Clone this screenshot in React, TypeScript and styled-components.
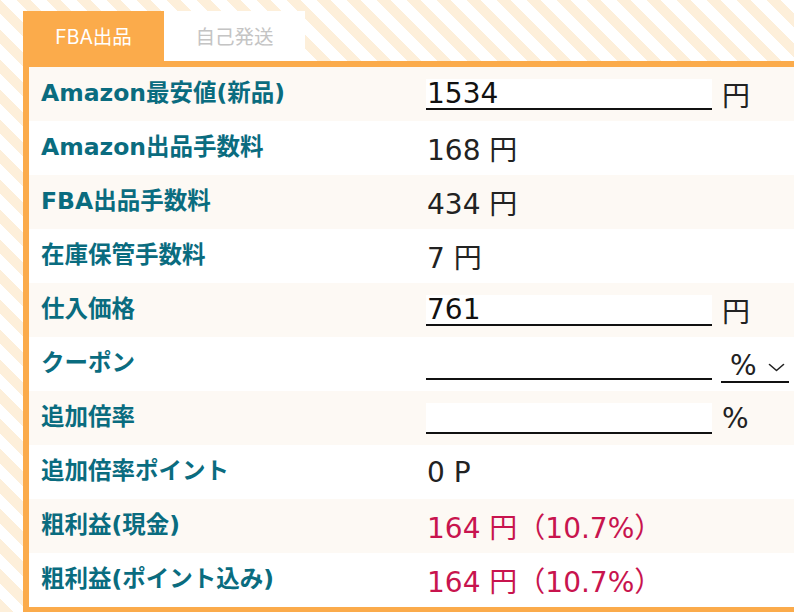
import React, { useState } from "react";
import styled, { createGlobalStyle } from "styled-components";

const ORANGE = "#fbab4b";
const TEAL = "#0a6c7f";
const PROFIT = "#c8144e";

const GlobalStyle = createGlobalStyle`
  html, body {
    margin: 0;
    padding: 0;
    overflow: hidden;
  }
  body {
    background: repeating-linear-gradient(
      45deg,
      #fdefda 0 10px,
      #ffffff 10px 21.2px
    );
    min-height: 612px;
  }
`;

interface RowData {
  label: string;
  kind: "input" | "text" | "coupon" | "profit";
  value?: string;
  unit?: string;
}

const rows: RowData[] = [
  { label: "Amazon最安値(新品)", kind: "input", value: "1534", unit: "円" },
  { label: "Amazon出品手数料", kind: "text", value: "168 円" },
  { label: "FBA出品手数料", kind: "text", value: "434 円" },
  { label: "在庫保管手数料", kind: "text", value: "7 円" },
  { label: "仕入価格", kind: "input", value: "761", unit: "円" },
  { label: "クーポン", kind: "coupon", value: "" },
  { label: "追加倍率", kind: "input", value: "", unit: "%" },
  { label: "追加倍率ポイント", kind: "text", value: "0 P" },
  { label: "粗利益(現金)", kind: "profit", value: "164 円（10.7%）" },
  { label: "粗利益(ポイント込み)", kind: "profit", value: "164 円（10.7%）" },
];

const App: React.FC = () => {
  const [tab, setTab] = useState<"fba" | "self">("fba");

  return (
    <>
      <GlobalStyle />
      <Page>
        <Panel>
          <Tabs>
            <Tab $active={tab === "fba"} onClick={() => setTab("fba")}>
              FBA出品
            </Tab>
            <Tab $active={tab === "self"} onClick={() => setTab("self")}>
              自己発送
            </Tab>
          </Tabs>

          <Sheet>
            {rows.map((row, i) => (
              <Row key={row.label} $alt={i % 2 === 0}>
                <Label>{row.label}</Label>
                <Cell>
                  {row.kind === "input" && (
                    <>
                      <NumberInput defaultValue={row.value} />
                      <Unit>{row.unit}</Unit>
                    </>
                  )}
                  {row.kind === "coupon" && (
                    <>
                      <NumberInput defaultValue="" />
                      <UnitSelect>
                        <span>%</span>
                        <svg width="17" height="9" viewBox="0 0 17 9">
                          <path
                            d="M1.5 1.5 L8.5 7.5 L15.5 1.5"
                            fill="none"
                            stroke="#222"
                            strokeWidth="1.6"
                            strokeLinecap="round"
                            strokeLinejoin="round"
                          />
                        </svg>
                      </UnitSelect>
                    </>
                  )}
                  {row.kind === "text" && <Value>{row.value}</Value>}
                  {row.kind === "profit" && <Value $profit>{row.value}</Value>}
                </Cell>
              </Row>
            ))}
          </Sheet>
        </Panel>
      </Page>
    </>
  );
};

const Page = styled.div`
  padding: 11px 0 0 23px;
`;

const Panel = styled.div`
  width: 800px;
`;

const Tabs = styled.div`
  display: flex;
`;

const Tab = styled.div<{ $active: boolean }>`
  width: 141px;
  height: 50px;
  display: flex;
  align-items: center;
  justify-content: center;
  background: ${(p) => (p.$active ? ORANGE : "#ffffff")};
  color: ${(p) => (p.$active ? "#ffffff" : "#c4c4c4")};
  font-family: "Inter", "Noto Sans CJK JP", sans-serif;
  font-size: 19.5px;
  padding-bottom: 2px;
  box-sizing: border-box;
  cursor: pointer;
`;

const Sheet = styled.div`
  border: 6px solid ${ORANGE};
  border-right: none;
`;

const Row = styled.div<{ $alt: boolean }>`
  display: grid;
  grid-template-columns: 397px 1fr;
  height: 54px;
  background: ${(p) => (p.$alt ? "#fdf9f4" : "#ffffff")};
`;

const Label = styled.div`
  align-self: center;
  padding: 0 0 6px 12px;
  font-family: "DejaVu Sans", "Noto Sans CJK JP", sans-serif;
  font-weight: 700;
  font-size: 23.5px;
  color: ${TEAL};
  white-space: nowrap;
`;

const Cell = styled.div`
  display: flex;
  align-items: center;
  font-family: "DejaVu Sans", "Noto Sans CJK JP", sans-serif;
  font-size: 28px;
  color: #222;
`;

const NumberInput = styled.input`
  width: 286px;
  height: 31px;
  box-sizing: border-box;
  border: none;
  border-bottom: 2px solid #111;
  background: #ffffff;
  padding: 0 0 0 1px;
  margin: 0;
  font: inherit;
  color: #111;
  line-height: 29px;
  outline: none;
`;

const Unit = styled.span`
  margin-left: 10px;
`;

const UnitSelect = styled.div`
  display: flex;
  align-items: center;
  gap: 11px;
  width: 68px;
  height: 33px;
  box-sizing: border-box;
  margin: 4px 0 0 9px;
  padding-left: 9px;
  border-bottom: 2px solid #111;

  svg {
    margin-top: 4px;
  }
`;

const Value = styled.span<{ $profit?: boolean }>`
  padding-left: 1px;
  color: ${(p) => (p.$profit ? PROFIT : "#222")};
`;

export default App;
